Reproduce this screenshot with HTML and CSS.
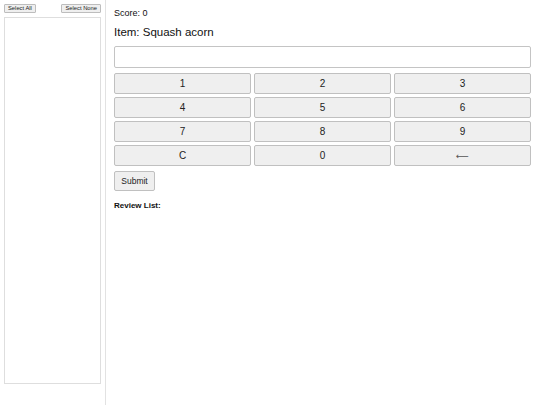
FILE: index.html
```html
<!DOCTYPE html>
<html>
<head>
<meta charset="utf-8">
<link rel="stylesheet" href="styles.css">
</head>
<body>
<div class="app">
  <aside class="sidebar">
    <div class="sel-row">
      <button class="tiny-btn">Select All</button>
      <button class="tiny-btn">Select None</button>
    </div>
    <div class="listbox"></div>
  </aside>
  <main class="main">
    <div class="score">Score: 0</div>
    <div class="item">Item: Squash acorn</div>
    <input class="answer" type="text">
    <div class="keypad">
      <button class="key">1</button>
      <button class="key">2</button>
      <button class="key">3</button>
      <button class="key">4</button>
      <button class="key">5</button>
      <button class="key">6</button>
      <button class="key">7</button>
      <button class="key">8</button>
      <button class="key">9</button>
      <button class="key">C</button>
      <button class="key">0</button>
      <button class="key arrow">&#x27F5;</button>
    </div>
    <button class="submit">Submit</button>
    <div class="review">Review List:</div>
  </main>
</div>
</body>
</html>
```

FILE: styles.css
```css
html, body {
  margin: 0;
  padding: 0;
  background: #fff;
  font-family: "Liberation Sans", Arial, sans-serif;
  color: #111;
}
.app {
  display: flex;
  width: 540px;
  height: 405px;
}
.sidebar {
  width: 97px;
  padding: 4px 4px 0 4px;
  border-right: 1px solid #e2e2e2;
  box-sizing: content-box;
  flex: none;
}
.sel-row {
  display: flex;
  justify-content: space-between;
  height: 9px;
}
.tiny-btn {
  font-family: "Liberation Sans", Arial, sans-serif;
  font-size: 5.8px;
  height: 9px;
  padding: 0 3px;
  line-height: 7px;
  background: #efefef;
  border: 1px solid #bdbdbd;
  border-radius: 1px;
  color: #222;
}
.listbox {
  margin-top: 4px;
  height: 365px;
  border: 1px solid #dedede;
}
.main {
  flex: 1;
  padding: 8px 9px 0 8px;
  display: flex;
  flex-direction: column;
  align-items: flex-start;
}
.score {
  font-size: 9px;
  line-height: 11px;
}
.item {
  margin-top: 6px;
  font-size: 11.5px;
  line-height: 14px;
}
.answer {
  margin: 7px 0 0 0;
  width: 100%;
  height: 22px;
  box-sizing: border-box;
  border: 1px solid #c4c4c4;
  border-radius: 2px;
  padding: 0 4px;
}
.keypad {
  margin-top: 5px;
  width: 100%;
  display: grid;
  grid-template-columns: repeat(3, 1fr);
  grid-auto-rows: 21px;
  gap: 3px;
}
.key, .submit {
  font-family: "Liberation Sans", Arial, sans-serif;
  font-size: 10px;
  color: #222;
  background: #efefef;
  border: 1px solid #c0c0c0;
  border-radius: 2px;
  padding: 0;
}
.key.arrow {
  font-family: "DejaVu Sans", sans-serif;
  font-size: 9px;
  color: #555;
}
.submit {
  margin-top: 5px;
  width: 41px;
  height: 20px;
  font-size: 8.5px;
}
.review {
  margin-top: 10px;
  font-size: 8px;
  font-weight: bold;
  line-height: 10px;
}
```
